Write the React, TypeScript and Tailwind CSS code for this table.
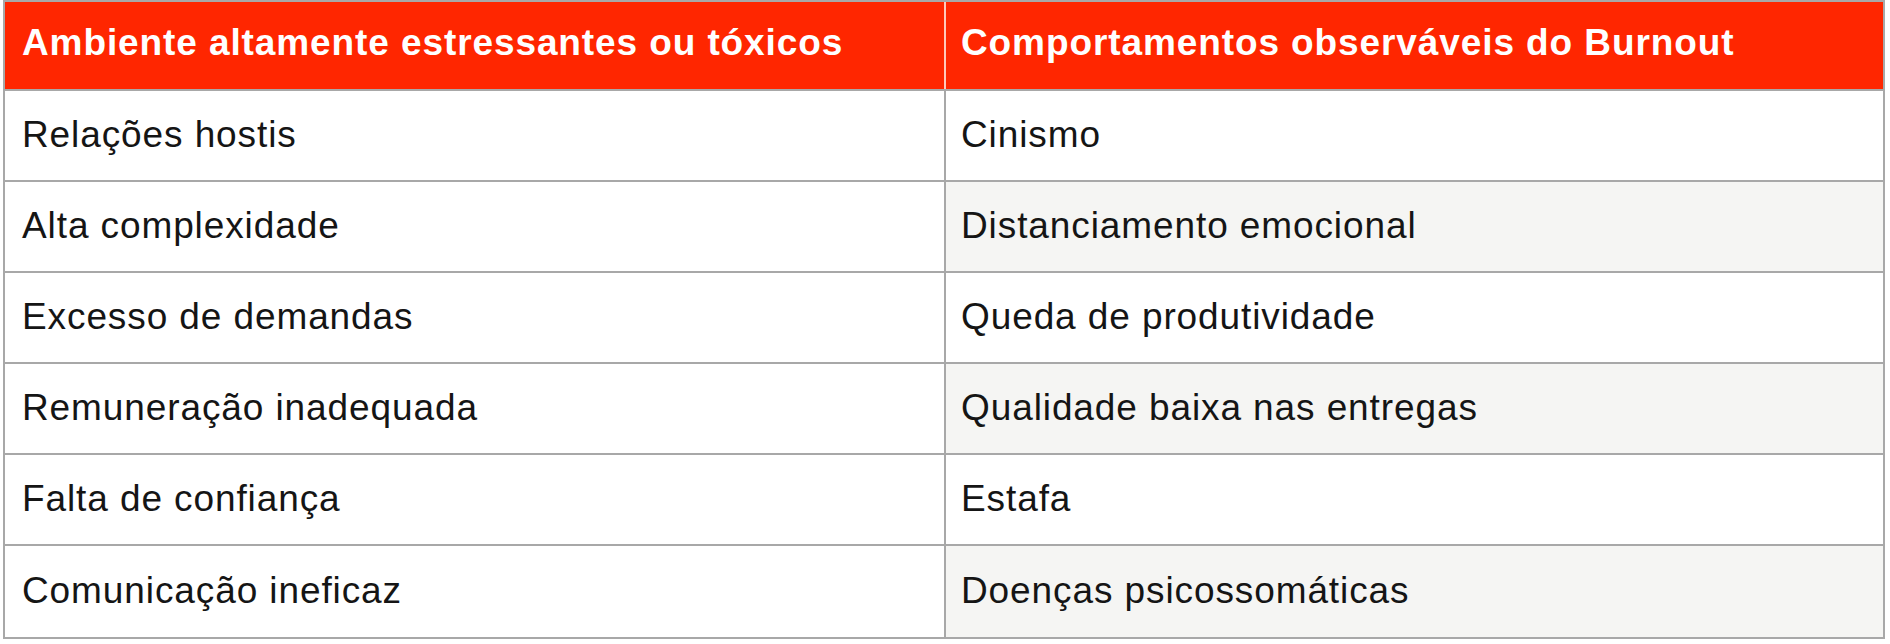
import React from "react";

const rows: [string, string][] = [
  ["Relações hostis", "Cinismo"],
  ["Alta complexidade", "Distanciamento emocional"],
  ["Excesso de demandas", "Queda de produtividade"],
  ["Remuneração inadequada", "Qualidade baixa nas entregas"],
  ["Falta de confiança", "Estafa"],
  ["Comunicação ineficaz", "Doenças psicossomáticas"],
];

export default function App() {
  return (
    <div className="w-[1890px] h-[644px] bg-white font-['Liberation_Sans',Arial,sans-serif]">
      <div className="ml-[3px] w-[1882px] border-2 border-[#a8a8a8] text-[37px] tracking-[0.9px]">
        <div className="grid grid-cols-[941px_1fr] h-[89px] bg-[#ff2600] border-b-2 border-[#a8a8a8] font-bold text-white">
          <div className="flex items-center pl-[17px] pb-[6px] border-r-2 border-[#ffc8ba]">
            Ambiente altamente estressantes ou tóxicos
          </div>
          <div className="flex items-center pl-[15px] pb-[6px]">Comportamentos observáveis do Burnout</div>
        </div>
        {rows.map(([a, b], i) => (
          <div
            key={i}
            className={`grid grid-cols-[941px_1fr] h-[91px] text-[#151515] ${
              i < rows.length - 1 ? "border-b-2 border-[#a8a8a8]" : ""
            }`}
          >
            <div className="flex items-center pl-[17px] pb-[2px] border-r-2 border-[#a8a8a8] bg-white">{a}</div>
            <div className={`flex items-center pl-[15px] pb-[2px] ${i % 2 === 1 ? "bg-[#f5f5f3]" : "bg-white"}`}>{b}</div>
          </div>
        ))}
      </div>
    </div>
  );
}
